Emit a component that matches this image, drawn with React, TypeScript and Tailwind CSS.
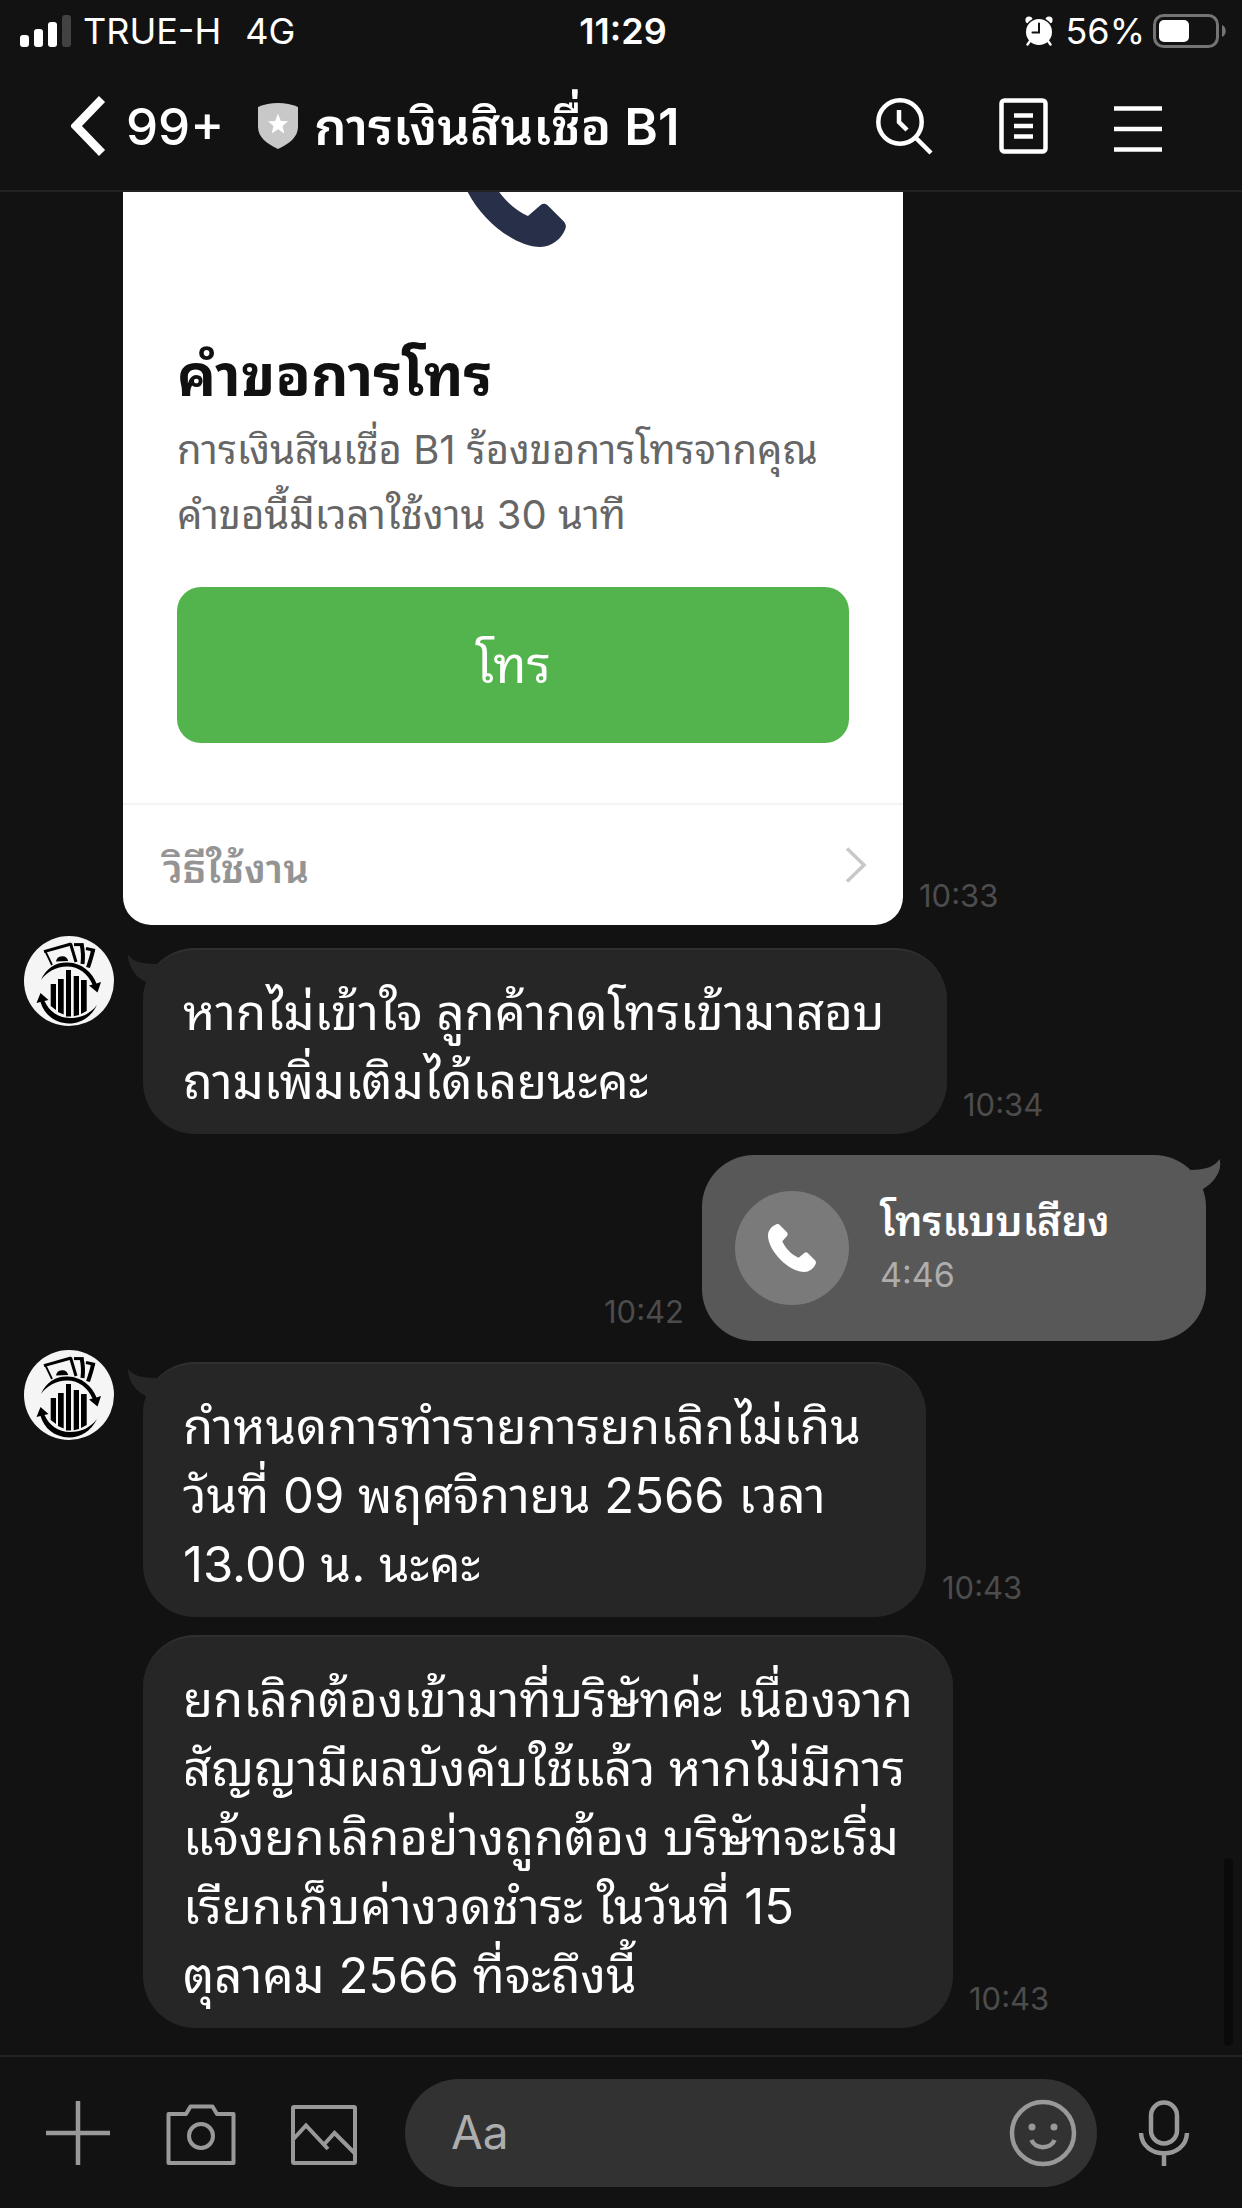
import type { ReactNode } from 'react';

const PHONE_PATH =
  'M8 .6C9.5-.2 11 0 12 1.2L18.9 8.3C19.9 9.5 19.9 10.8 19 11.9L14.3 17.2C17 24 24 31 30.6 33.8L36.3 28.9C37.4 28 38.7 28.1 39.7 29L47 36.3C48 37.5 48.2 38.5 47.6 40C46 44 41.5 48 36.3 48C21 48 0 27 0 11.5C0 6.5 4 2 8 .6Z';

function PhoneIcon({ className }: { className: string }) {
  return (
    <svg viewBox="0 0 48 48" className={className} fill="currentColor">
      <path d={PHONE_PATH} />
    </svg>
  );
}

function Avatar() {
  return (
    <svg viewBox="0 0 90 90" className="w-[90px] h-[90px] shrink-0">
      <circle cx="45" cy="45" r="45" fill="#f5f5f5" />
      {/* banknotes */}
      <g fill="none" stroke="#000" strokeWidth="2.6">
        <path d="M28 29L21.5 15.5" strokeWidth="1.8" />
        <path d="M20 15.6L47 8" strokeWidth="3" />
        <path d="M46.5 7.5L52 26" strokeWidth="3" />
        <path d="M50 8.6H59.5" strokeWidth="3" />
        <path d="M57.5 8C59 14 59.5 20 58.5 28" strokeWidth="4" />
        <path d="M62 12.5L71 14.5" strokeWidth="3" />
        <path d="M69 14C68 20 66 25 64 31.5" strokeWidth="4" />
      </g>
      <path d="M32 25.6a6.2 6.2 0 0 1 12.2-.6z" />
      {/* bars */}
      <path d="M26.7 48H32v26l-5.300-4zM34 43h5.700v35.500L34 76zM42 34h5v46.500h-5zM49.700 40H55v39l-5.300 1.200zM57 44h5.700v31L57 78z" />
      {/* circling arrows */}
      <path d="M17 44C22 32 32 26 44 26.500C58 27 68 36 72.500 47.500L77 46L73.500 56.500L65 49.500L68.500 48.500C64 38 55 30.500 43 30.500C32 30.500 23 36 17 44Z" />
      <path d="M16.500 57L24.500 64L20.500 65C25 75 34 82 46 82C57 82 66 78 73 69C67 81 57 87.500 45 87.500C30 87 20 78 16.500 66L12.500 67Z" />
    </svg>
  );
}

function StatusBar() {
  return (
    <div className="grid grid-cols-3 items-center h-[62px] pl-5 pr-4 text-[36px] leading-none shrink-0">
      <div className="flex items-center gap-3">
        <svg viewBox="0 0 51 32" className="w-[51px] h-8">
          <rect x="0" y="20" width="9" height="12" rx="3" fill="#fff" />
          <rect x="14" y="14" width="9" height="18" rx="3" fill="#fff" />
          <rect x="28" y="7" width="9" height="25" rx="3" fill="#fff" />
          <rect x="42" y="0" width="9" height="32" rx="3" fill="#424242" />
        </svg>
        <span>TRUE-H</span>
        <span className="ml-3">4G</span>
      </div>
      <div className="text-center font-semibold">11:29</div>
      <div className="flex items-center justify-end">
        <svg viewBox="0 0 28 30" className="w-7 h-[30px] mr-3">
          <circle cx="4" cy="4" r="3.600" fill="#fff" />
          <circle cx="24" cy="4" r="3.600" fill="#fff" />
          <circle cx="14" cy="16" r="14.500" fill="#121212" />
          <circle cx="14" cy="16" r="13" fill="#fff" />
          <path d="M5 25L2.500 28.500M23 25L25.500 28.500" stroke="#fff" strokeWidth="2.400" strokeLinecap="round" />
          <path d="M14 7.500V16.500H7.500" fill="none" stroke="#121212" strokeWidth="2" strokeLinecap="round" />
        </svg>
        <span className="mr-2">56%</span>
        <svg viewBox="0 0 73 34" className="w-[73px] h-[34px]">
          <rect x="1.500" y="1.500" width="63" height="31" rx="9" fill="none" stroke="#747474" strokeWidth="3" />
          <rect x="6" y="6" width="30" height="22" rx="5" fill="#fff" />
          <path d="M69 11C74 13 74 21 69 23Z" fill="#747474" />
        </svg>
      </div>
    </div>
  );
}

function Header() {
  return (
    <header className="flex items-center h-[130px] pl-[71px] pr-20 border-b-2 border-[#232323] shrink-0">
      <button aria-label="Back" className="flex items-center gap-5 text-[51px] leading-none font-medium">
        <svg viewBox="0 0 35 60" className="w-[35px] h-[60px]">
          <path d="M31 3L5 30L31 57" fill="none" stroke="#fff" strokeWidth="8.500" />
        </svg>
        99+
      </button>
      <svg viewBox="0 0 40 46" className="w-10 h-[46px] ml-[34px] mr-4 shrink-0">
        <path d="M20 0C27 0 34 1.500 40 4V24C40 34 31 41 20 46C9 41 0 34 0 24V4C6 1.500 13 0 20 0Z" fill="#c8c8c8" />
        <path d="M20 10.500L22.800 18L30 18.300L24.500 23L26.300 30.500L20 26.300L13.700 30.500L15.500 23L10 18.300L17.200 18Z" fill="#fff" />
      </svg>
      <h1 className="text-[51px] leading-none font-semibold whitespace-nowrap">การเงินสินเชื่อ B1</h1>
      <div className="flex items-center ml-auto gap-[66px]">
        <button aria-label="Search">
          <svg viewBox="0 0 57 57" className="w-[57px] h-[57px]" fill="none" stroke="#fff" strokeWidth="4.500">
            <circle cx="24" cy="24" r="21.700" />
            <path d="M39.500 39.500L55 55" />
            <path d="M23 12V24L31 32" />
          </svg>
        </button>
        <button aria-label="Notes">
          <svg viewBox="0 0 49 56" className="w-[49px] h-14" fill="none" stroke="#fff" strokeWidth="4.500">
            <rect x="2.500" y="2.500" width="44" height="51" rx="3" />
            <path d="M15 17.500H34M15 28H34M15 38.500H34" />
          </svg>
        </button>
        <button aria-label="Menu">
          <svg viewBox="0 0 48 56" className="w-12 h-14" fill="none" stroke="#fff" strokeWidth="4.500">
            <path d="M0 10.500H48M0 31H48M0 51.500H48" />
          </svg>
        </button>
      </div>
    </header>
  );
}

function Time({ children }: { children: ReactNode }) {
  return <time className="text-[31px] leading-none text-[#4c4c4c] mb-[14px]">{children}</time>;
}

type MessageProps = { lines: string[]; time: string; width: string; first?: boolean };

function Message({ lines, time, width, first }: MessageProps) {
  return (
    <div className="flex items-start">
      <div className="w-[119px] shrink-0 -mt-3">{first && <Avatar />}</div>
      <div className="flex items-end gap-4">
        <div className={`relative ${width} bg-[#262626] border-t-2 border-[#303030] rounded-[52px] pl-10 pt-7 pb-[18px]`}>
          {first && (
            <svg viewBox="0 0 50 36" className="absolute -left-4 top-1 w-[50px] h-9">
              <path d="M.5 0C5 7 13 10 32 10L44 20L21 36L19 28C9 23 2 15 .5 0Z" fill="#262626" />
            </svg>
          )}
          {lines.map((line) => (
            <p key={line} className="text-[49px] leading-[69px] whitespace-nowrap">{line}</p>
          ))}
        </div>
        <Time>{time}</Time>
      </div>
    </div>
  );
}

function CallRequestCard() {
  return (
    <div className="flex items-end gap-4 pl-[99px]">
      <div className="w-[780px] bg-white rounded-[28px] text-[#111]">
        <div className="px-[54px] pt-12">
          <PhoneIcon className="w-[105px] h-[105px] mx-auto text-[#283049]" />
          <h2 className="mt-[88px] mb-[2px] text-[58px] leading-[80px] font-bold">คำขอการโทร</h2>
          <p className="text-[40px] leading-[65px] text-[#666]">
            การเงินสินเชื่อ B1 ร้องขอการโทรจากคุณ
            <br />
            คำขอนี้มีเวลาใช้งาน 30 นาที
          </p>
          <button className="w-full h-[156px] mt-10 mb-[60px] rounded-3xl bg-[#53b34c] text-white text-[51px]">โทร</button>
        </div>
        <a href="#guide" className="flex items-center justify-between h-[122px] pl-10 pr-9 border-t-2 border-[#f4f4f4] text-[40px] font-semibold text-[#949494]">
          <span className="pt-2">วิธีใช้งาน</span>
          <svg viewBox="0 0 22 36" className="w-[22px] h-9">
            <path d="M2 1.500L19 18L2 34.500" fill="none" stroke="#c8c8c8" strokeWidth="3.500" />
          </svg>
        </a>
      </div>
      <Time>10:33</Time>
    </div>
  );
}

function CallBubble() {
  return (
    <div className="flex items-end justify-end gap-[18px] pr-3">
      <Time>10:42</Time>
      <div className="relative flex items-center gap-[31px] w-[504px] h-[186px] pl-[33px] bg-[#585858] rounded-[52px]">
        <svg viewBox="0 0 50 36" className="absolute -right-[15px] top-1 w-[50px] h-9">
          <path d="M48.500 0C44 7 36 11 19 11L6 20L29 36L32 30C43 24 52 11 48.500 0Z" fill="#585858" />
        </svg>
        <div className="flex items-center justify-center w-[114px] h-[114px] rounded-full bg-[#7a7a7a]">
          <PhoneIcon className="w-12 h-12 text-white" />
        </div>
        <div>
          <p className="text-[41px] leading-[54px] font-semibold">โทรแบบเสียง</p>
          <p className="text-[34px] leading-[54px] text-[#adadad]">4:46</p>
        </div>
      </div>
    </div>
  );
}

function Composer() {
  return (
    <footer className="flex items-center h-[153px] pl-[46px] pr-[52px] border-t-2 border-[#232323] shrink-0 text-[#999]">
      <button aria-label="Add">
        <svg viewBox="0 0 64 64" className="w-16 h-16" stroke="currentColor" strokeWidth="4.500">
          <path d="M32 0V64M0 32H64" />
        </svg>
      </button>
      <button aria-label="Camera" className="ml-14">
        <svg viewBox="0 0 70 64" className="w-[70px] h-16" fill="none" stroke="currentColor" strokeWidth="4" strokeLinejoin="round">
          <path d="M2.500 13H20L24.500 5.500H46.500L51 13H67.500V62H2.500Z" />
          <circle cx="35" cy="35" r="12" />
        </svg>
      </button>
      <button aria-label="Photos" className="ml-[55px]">
        <svg viewBox="0 0 66 64" className="w-[66px] h-16" fill="none" stroke="currentColor" strokeWidth="4" strokeLinejoin="round">
          <rect x="2" y="6" width="62" height="56" rx="1" />
          <path d="M2 38.500L15 24.500L37 48M33 43.500L43.500 32L64 52.500" strokeLinejoin="miter" />
        </svg>
      </button>
      <div className="flex items-center flex-1 min-w-0 h-[108px] ml-12 pl-[46px] pr-5 rounded-full bg-[#323232]">
        <input
          aria-label="Message"
          placeholder="Aa"
          className="flex-1 min-w-0 bg-transparent outline-none text-[46px] text-white placeholder:text-[#adadad]"
        />
        <button aria-label="Stickers">
          <svg viewBox="0 0 68 68" className="w-[68px] h-[68px]" fill="none" stroke="currentColor" strokeWidth="4.500">
            <circle cx="34" cy="34" r="31" />
            <circle cx="23" cy="28" r="3.500" fill="currentColor" stroke="none" />
            <circle cx="45" cy="28" r="3.500" fill="currentColor" stroke="none" />
            <path d="M22.500 41C26 50.500 42 50.500 45.500 41" />
          </svg>
        </button>
      </div>
      <button aria-label="Voice message" className="ml-[41px]">
        <svg viewBox="0 0 52 66" className="w-[52px] h-[66px]" fill="none" stroke="currentColor" strokeWidth="4.500">
          <rect x="13" y="2.500" width="26" height="41" rx="13" />
          <path d="M3 33C4 60 48 60 49 33M26 53.500V66" />
        </svg>
      </button>
    </footer>
  );
}

export default function App() {
  return (
    <div className="flex flex-col h-screen overflow-hidden bg-[#121212] text-white font-['Inter','Noto_Sans_Thai_Looped','Loma','Garuda','Sarabun','Waree','Noto_Sans_Thai',sans-serif]">
      <StatusBar />
      <Header />
      <main className="relative flex flex-col justify-end flex-1 min-h-0 overflow-hidden px-6 pb-[27px]">
        <CallRequestCard />
        <div className="mt-[23px]">
          <Message
            first
            time="10:34"
            width="w-[804px]"
            lines={['หากไม่เข้าใจ ลูกค้ากดโทรเข้ามาสอบ', 'ถามเพิ่มเติมได้เลยนะคะ']}
          />
        </div>
        <div className="mt-[21px]">
          <CallBubble />
        </div>
        <div className="mt-[21px]">
          <Message
            first
            time="10:43"
            width="w-[783px]"
            lines={['กำหนดการทำรายการยกเลิกไม่เกิน', 'วันที่ 09 พฤศจิกายน 2566 เวลา', '13.00 น. นะคะ']}
          />
        </div>
        <div className="mt-[18px]">
          <Message
            time="10:43"
            width="w-[810px]"
            lines={[
              'ยกเลิกต้องเข้ามาที่บริษัทค่ะ เนื่องจาก',
              'สัญญามีผลบังคับใช้แล้ว หากไม่มีการ',
              'แจ้งยกเลิกอย่างถูกต้อง บริษัทจะเริ่ม',
              'เรียกเก็บค่างวดชำระ ในวันที่ 15',
              'ตุลาคม 2566 ที่จะถึงนี้',
            ]}
          />
        </div>
        {/* scroll thumb */}
        <div className="absolute right-[9px] bottom-[9px] w-[9px] h-[188px] rounded-full bg-[#0a0a0a]" />
      </main>
      <Composer />
    </div>
  );
}
